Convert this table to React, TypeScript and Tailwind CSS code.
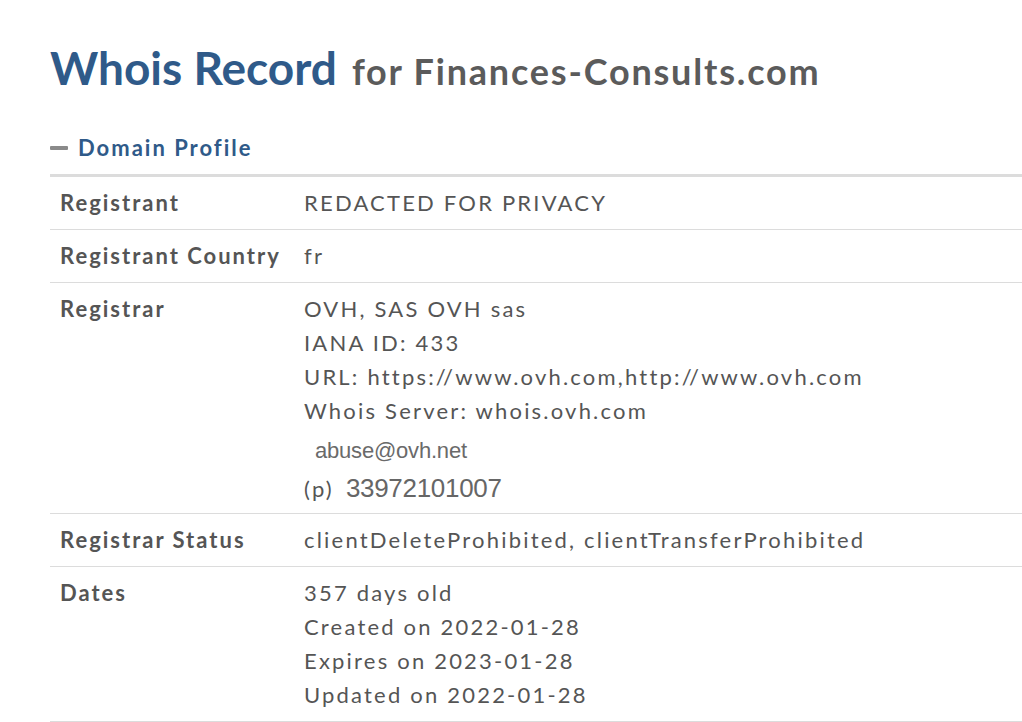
import React from "react";

type Row = { label: string; values: React.ReactNode };

function Value({ children }: { children: React.ReactNode }) {
  return <div className="leading-[34px]">{children}</div>;
}

const rows: Row[] = [
  { label: "Registrant", values: <Value>REDACTED FOR PRIVACY</Value> },
  { label: "Registrant Country", values: <Value>fr</Value> },
  {
    label: "Registrar",
    values: (
      <>
        <Value>OVH, SAS OVH sas</Value>
        <Value>IANA ID: 433</Value>
        <Value>URL: https://www.ovh.com,http://www.ovh.com</Value>
        <Value>Whois Server: whois.ovh.com</Value>
        <div className="flex h-[44px] items-center pl-[11px] font-['Liberation_Sans',sans-serif] text-[22px] tracking-[-0.2px] text-[#6a6a6a]">
          abuse@ovh.net
        </div>
        <div className="flex h-[32px] items-center">
          <span>(p)</span>
          <span className="ml-[12px] font-['Liberation_Sans',sans-serif] text-[26px] tracking-[-0.3px] text-[#666]">
            33972101007
          </span>
        </div>
      </>
    ),
  },
  {
    label: "Registrar Status",
    values: <Value>clientDeleteProhibited, clientTransferProhibited</Value>,
  },
  {
    label: "Dates",
    values: (
      <>
        <Value>357 days old</Value>
        <Value>Created on 2022-01-28</Value>
        <Value>Expires on 2023-01-28</Value>
        <Value>Updated on 2022-01-28</Value>
      </>
    ),
  },
];

export default function App() {
  return (
    <div className="min-h-screen bg-white pl-[50px] font-['Lato',sans-serif] text-[#555]">
      <h1 className="flex items-baseline pt-[38px] leading-[60px] font-bold whitespace-nowrap">
        <span className="text-[46px] text-[#2f5a89]">Whois Record</span>
        <span className="ml-[15px] text-[36px] tracking-[1.8px] text-[#5b5b5b]">
          for Finances-Consults.com
        </span>
      </h1>

      <div className="mt-[30px] flex items-center gap-[10px]">
        <span className="h-[4px] w-[18px] rounded-[1px] bg-[#8a8a8a]" />
        <span className="text-[22px] font-bold tracking-[2px] text-[#2f5a89]">
          Domain Profile
        </span>
      </div>

      <div className="mt-[10px] border-t-[3px] border-[#dcdcdc]">
        {rows.map((row) => (
          <div
            key={row.label}
            className="flex border-b border-[#dcdcdc] py-[9px] text-[22px]"
          >
            <div className="w-[254px] shrink-0 pl-[10px] leading-[34px] font-bold tracking-[2px] text-[#555]">
              {row.label}
            </div>
            <div className="flex-1 tracking-[2.2px] text-[#555]">{row.values}</div>
          </div>
        ))}
      </div>
    </div>
  );
}
